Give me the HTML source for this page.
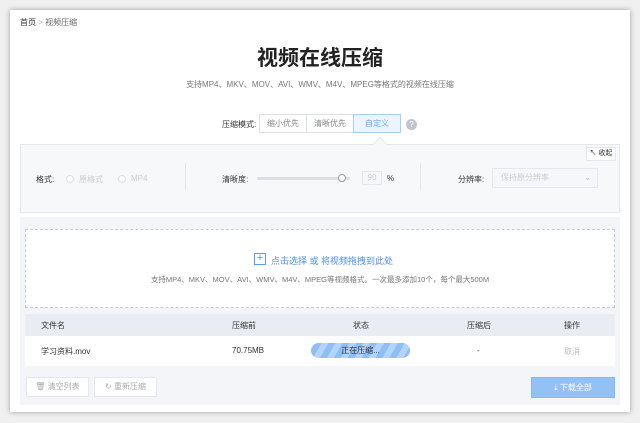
<!DOCTYPE html>
<html><head><meta charset="utf-8"><style>
*{margin:0;padding:0;box-sizing:border-box}
body{width:640px;height:423px;background:#f0f0f0;font-family:"Liberation Sans","Noto Sans CJK SC",sans-serif;position:relative;overflow:hidden;color:#333}
.a{position:absolute}
.win{left:10px;top:10px;width:620px;height:402px;background:#fff;box-shadow:0 0 5px rgba(0,0,0,.35)}
.t{font-size:8px;color:#666;white-space:nowrap}
</style></head><body>
<div class="a win"></div>
<div class="a t" style="left:20px;top:17px;color:#333">首页 <span style="color:#aaa">&gt;</span> <span style="color:#666">视频压缩</span></div>
<div class="a" style="left:0;width:640px;top:42px;text-align:center;font-size:21px;font-weight:bold;color:#222;font-family:'Noto Sans CJK SC',sans-serif">视频在线压缩</div>
<div class="a t" style="left:0;width:640px;top:79px;text-align:center;color:#777">支持MP4、MKV、MOV、AVI、WMV、M4V、MPEG等格式的视频在线压缩</div>
<div class="a t" style="left:222px;top:119px;color:#333">压缩模式:</div>
<div class="a t" style="left:259px;top:114px;width:48px;height:19px;border:1px solid #dcdfe6;text-align:center;line-height:17px;color:#888">缩小优先</div>
<div class="a t" style="left:306px;top:114px;width:48px;height:19px;border:1px solid #dcdfe6;text-align:center;line-height:17px;color:#888">清晰优先</div>
<div class="a t" style="left:353px;top:114px;width:48px;height:19px;border:1px solid #a9cdf5;background:#ecf5ff;text-align:center;line-height:17px;color:#6aa6ee">自定义</div>
<div class="a" style="left:406px;top:119px;width:11px;height:11px;border-radius:50%;background:#c0c4cc;color:#fff;font-size:8px;text-align:center;line-height:11px">?</div>
<div class="a" style="left:20px;top:144px;width:600px;height:69px;background:#f7f8fa;border:1px solid #e4e7ed"></div>
<div class="a" style="left:375px;top:139px;width:10px;height:10px;background:#f7f8fa;border-left:1px solid #e4e7ed;border-top:1px solid #e4e7ed;transform:rotate(45deg)"></div>
<div class="a t" style="left:586px;top:147px;width:30px;height:14px;background:#fff;border:1px solid #e4e7ed;line-height:12px;text-align:center;color:#333;font-size:7px">↖ 收起</div>
<div class="a t" style="left:36px;top:174px;color:#333">格式:</div>
<div class="a" style="left:66px;top:175px;width:8px;height:8px;border-radius:50%;border:1px solid #ddd;background:#fff"></div>
<div class="a t" style="left:79px;top:174px;color:#ccc">原格式</div>
<div class="a" style="left:118px;top:175px;width:8px;height:8px;border-radius:50%;border:1px solid #ddd;background:#fff"></div>
<div class="a t" style="left:131px;top:174px;color:#ccc">MP4</div>
<div class="a" style="left:185px;top:163px;width:1px;height:27px;background:#e4e7ed"></div>
<div class="a" style="left:420px;top:163px;width:1px;height:27px;background:#e4e7ed"></div>
<div class="a t" style="left:222px;top:174px;color:#333">清晰度:</div>
<div class="a" style="left:257px;top:177px;width:93px;height:3px;background:#dcdfe6;border-radius:2px"></div>
<div class="a" style="left:338px;top:174px;width:8px;height:8px;border-radius:50%;background:#fff;border:1px solid #999"></div>
<div class="a t" style="left:362px;top:171px;width:20px;height:14px;border:1px solid #e4e7ed;background:#f5f7fa;color:#ccc;text-align:center;line-height:12px">90</div>
<div class="a t" style="left:387px;top:174px;color:#333">%</div>
<div class="a t" style="left:458px;top:174px;color:#333">分辨率:</div>
<div class="a t" style="left:492px;top:168px;width:106px;height:20px;border:1px solid #e4e7ed;background:#f5f7fa;color:#ccc;line-height:18px;padding-left:8px">保持原分辨率<span style="position:absolute;right:6px;color:#bbb">⌄</span></div>
<div class="a" style="left:20px;top:217px;width:600px;height:188px;background:#f3f5f8"></div>
<div class="a" style="left:25px;top:229px;width:590px;height:79px;background:#fff;border:1px dashed #c5ccd6"></div>
<div class="a" style="left:254px;top:253px;width:12px;height:12px;border:1px solid #5a9cf0;color:#5a9cf0;font-size:11px;line-height:9px;text-align:center">+</div>
<div class="a t" style="left:271px;top:254px;color:#4a8ff0;font-size:9px">点击选择 或 将视频拖拽到此处</div>
<div class="a t" style="left:0;width:640px;text-align:center;top:274px;color:#777;font-size:7.5px">支持MP4、MKV、MOV、AVI、WMV、M4V、MPEG等视频格式。一次最多添加10个，每个最大500M</div>
<div class="a" style="left:25px;top:314px;width:590px;height:22px;background:#e9edf3"></div>
<div class="a" style="left:25px;top:336px;width:590px;height:30px;background:#fff"></div>
<div class="a t" style="left:41px;top:320px;color:#333">文件名</div>
<div class="a t" style="left:232px;top:320px;color:#333">压缩前</div>
<div class="a t" style="left:353px;top:320px;color:#333">状态</div>
<div class="a t" style="left:467px;top:320px;color:#333">压缩后</div>
<div class="a t" style="left:564px;top:320px;color:#333">操作</div>
<div class="a t" style="left:41px;top:346px;color:#333">学习资料.mov</div>
<div class="a t" style="left:232px;top:346px;color:#333">70.75MB</div>
<div class="a t" style="left:311px;top:343px;width:99px;height:15px;border-radius:8px;background:repeating-linear-gradient(-60deg,#8fbdf5 0 6px,#b5d4fa 6px 12px);text-align:center;line-height:15px;color:#333">正在压缩...</div>
<div class="a t" style="left:477px;top:346px;color:#333">-</div>
<div class="a t" style="left:564px;top:346px;color:#bbb">取消</div>
<div class="a t" style="left:26px;top:377px;width:63px;height:20px;background:#fff;border:1px solid #e4e7ed;line-height:18px;text-align:center;color:#aaa">🗑 清空列表</div>
<div class="a t" style="left:94px;top:377px;width:63px;height:20px;background:#fff;border:1px solid #e4e7ed;line-height:18px;text-align:center;color:#aaa">↻ 重新压缩</div>
<div class="a t" style="left:531px;top:377px;width:84px;height:21px;background:#93c1f6;border:1px solid #86b8f3;line-height:19px;text-align:center;color:#fff">⤓ 下载全部</div>
</body></html>
